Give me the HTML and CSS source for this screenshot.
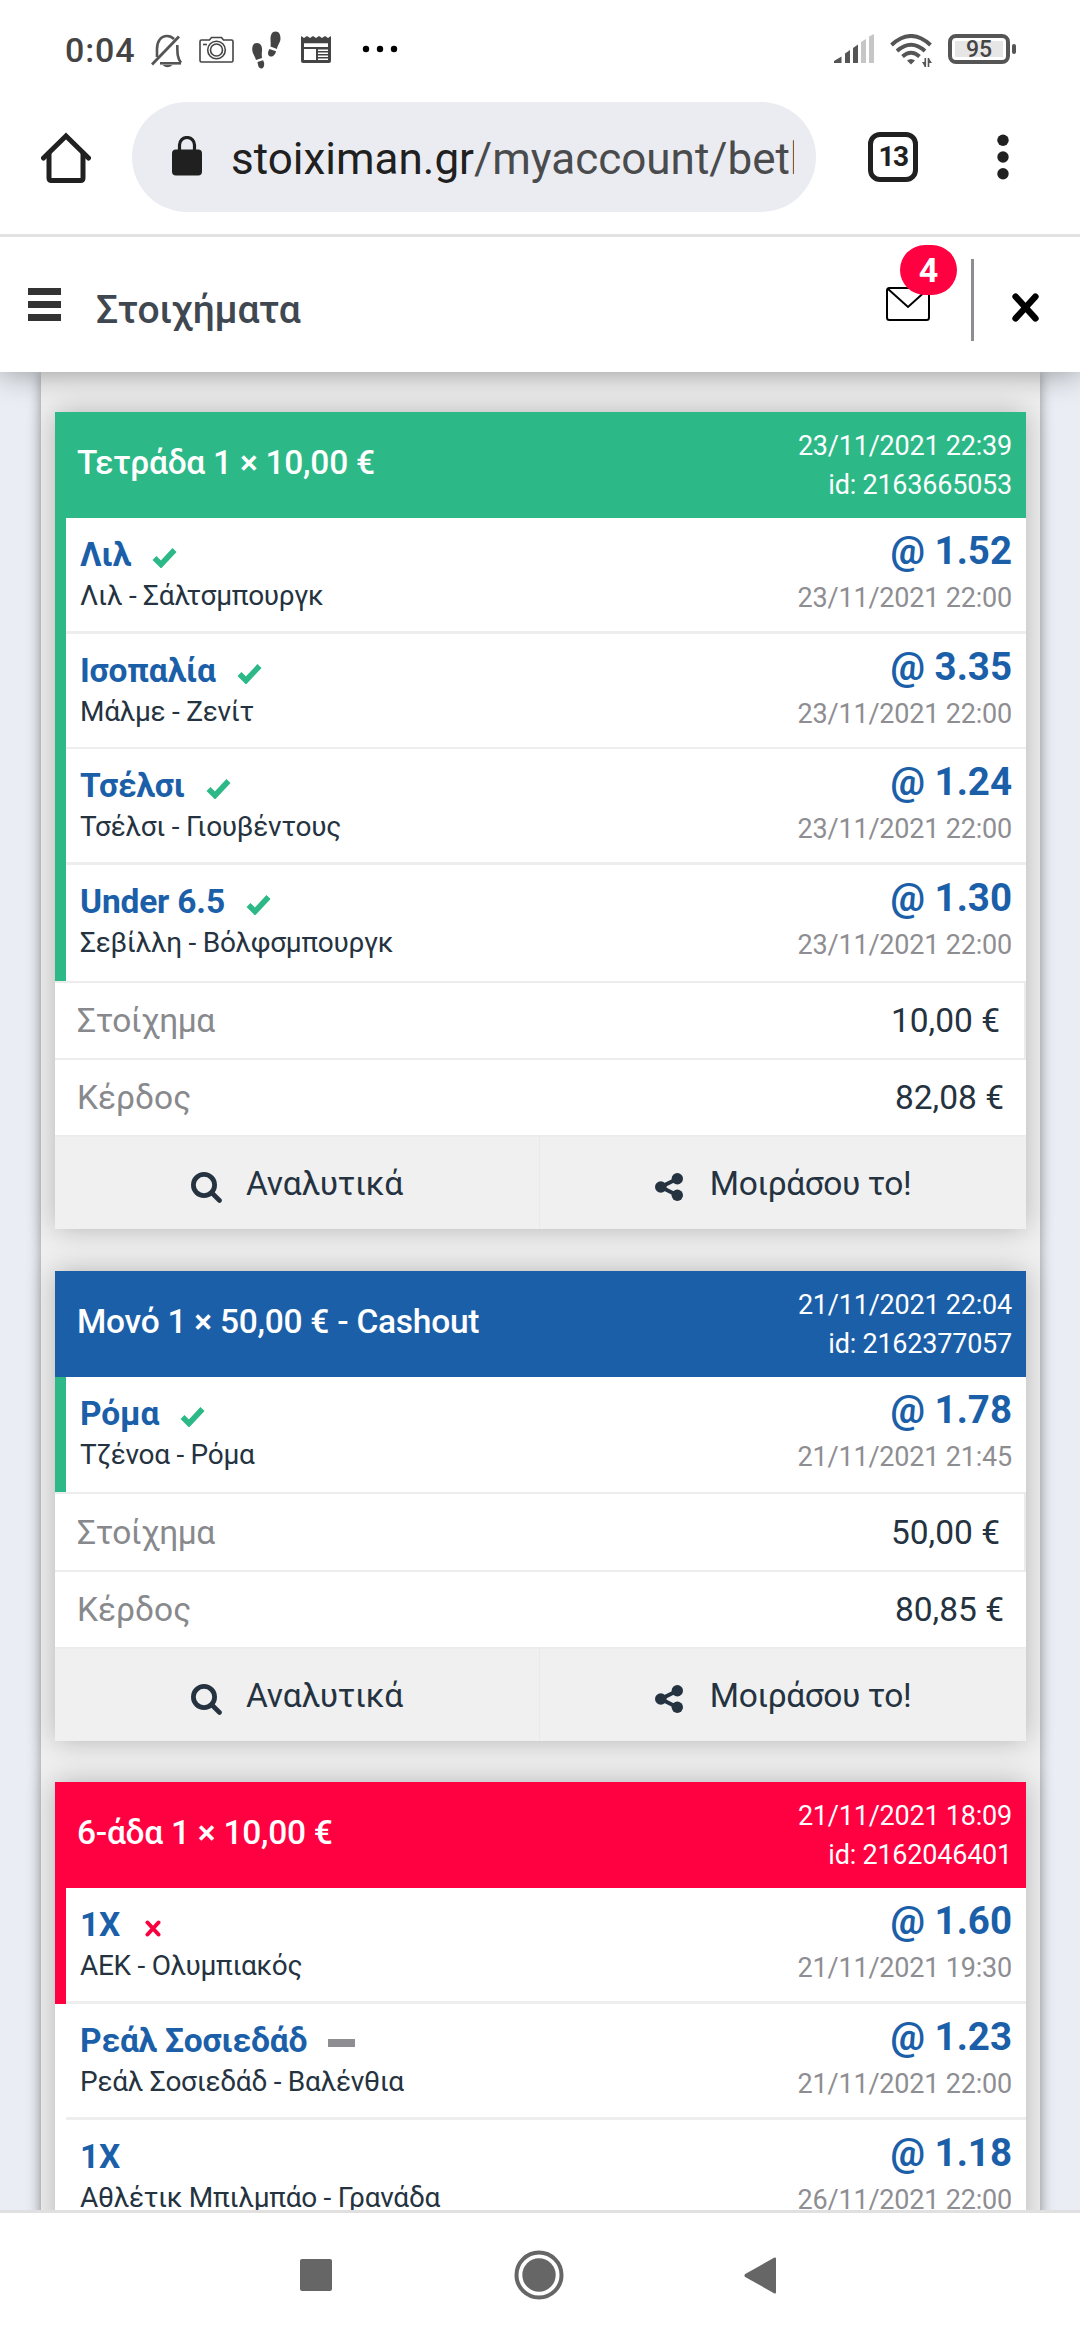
FILE: index.html
```html
<!DOCTYPE html>
<html lang="el">
<head>
<meta charset="utf-8">
<title>Στοιχήματα</title>
<link rel="stylesheet" href="styles.css">
</head>
<body>
<svg class="defs" width="0" height="0">
  <symbol id="check" viewBox="0 0 25 21"><path d="M2.5 11 L9 17.5 L22.5 3" fill="none" stroke="#2cb987" stroke-width="5.6"/></symbol>
  <symbol id="search" viewBox="0 0 31 31"><circle cx="13" cy="13" r="10.6" fill="none" stroke="#253341" stroke-width="4.8"/><path d="M20.5 20.5 L28.5 28.5" stroke="#253341" stroke-width="4.6" stroke-linecap="round"/></symbol>
  <symbol id="share" viewBox="0 0 28 28"><path d="M22.3 5.8 L5.8 14 L22.3 22.2" fill="none" stroke="#253341" stroke-width="4"/><circle cx="5.8" cy="14" r="5.8" fill="#253341"/><circle cx="22.3" cy="5.7" r="5.7" fill="#253341"/><circle cx="22.3" cy="22.3" r="5.7" fill="#253341"/></symbol>
</svg>
<div class="screen">
  <div class="status">
    <span class="clock">0:04</span>
    <svg class="st-bell" width="32" height="34" viewBox="0 0 32 34" fill="none" stroke="#555" stroke-width="2.6"><path d="M6 23 V15 C6 7 10 2 16 2 C19 2 21 3 23 5"/><path d="M9 29.3 H30"/><path d="M26.3 11 C26.3 20 26.5 24 30 28.8" /><path d="M1 30.5 L28 2.5" stroke-width="2.8"/><path d="M11.5 31 H21.5 Q16.500 35.500 11.500 31Z" fill="#555" stroke="none"/></svg>
    <svg class="st-cam" width="35" height="27" viewBox="0 0 35 27" fill="none" stroke="#444" stroke-width="1.6"><path d="M2.500 4 H10.500 L12.500 1.500 H22.500 L24.500 4 H32.500 Q34 4 34 5.500 V24.500 Q34 26 32.500 26 H2.500 Q1 26 1 24.500 V5.500 Q1 4 2.500 4Z"/><circle cx="17.500" cy="14" r="8.800"/><circle cx="17.500" cy="14" r="6"/><path d="M4 8.500 H8"/></svg>
    <svg class="st-feet" width="29" height="38" viewBox="0 0 29 38" fill="#444"><path d="M5 12 C9 12 10.500 16 10 20 C9.500 23 10 26 10 27 L4 29 C3 25 0 22 .2 18 C.4 14 2 12 5 12Z"/><path d="M5.500 31 L11 29.300 C13 32 12.500 37.500 9.500 37.500 C6.500 37.500 6 34 5.500 31Z"/><path d="M23.500 .5 C27.500 .5 28.500 4 28.500 7.500 C28.500 11.500 25.500 14 25 18 L18.500 15.500 C19 13 18.500 11 18.500 8 C18.500 4 20 .5 23.500 .5Z"/><path d="M17.500 18 L24 20.300 C23.500 23 21.500 26 18.500 25.500 C15.500 25 15.300 21.500 17.500 18Z"/></svg>
    <svg class="st-news" width="30" height="28" viewBox="0 0 30 28"><path d="M0 1 L3 3 L6 1 L9 3 L12 1 L15 3 L18 1 L21 3 L24 1 L27 3 L30 1 V26 Q30 28 28 28 H2 Q0 28 0 26Z" fill="#444"/><path d="M3 8.300 H27 V12 H3Z M3 14 H15 V25 H3Z M17 14.500 H27 V16 H17Z M17 17.500 H27 V19 H17Z M17 20.500 H27 V22 H17Z M17 23.500 H27 V25 H17Z" fill="#fff"/></svg>
    <svg class="st-dots" width="36" height="8" viewBox="0 0 36 8"><circle cx="4" cy="4" r="3.200"/><circle cx="18" cy="4" r="3.200"/><circle cx="32" cy="4" r="3.200"/></svg>
    <svg class="st-signal" width="40" height="30" viewBox="0 0 40 30"><path d="M0 29 V27 L7.500 22.500 V29Z M11 29 V19.500 L16 16 V29Z M19 29 V14 L24 10.500 V29Z" fill="#555"/><path d="M27 29 V8 L32 5 V29Z M35 29 V2.500 L40 0 V29Z" fill="#c6c6c6"/></svg>
    <svg class="st-wifi" width="43" height="34" viewBox="0 0 43 34" fill="none" stroke="#555" stroke-width="3.900"><path d="M1.500 11 Q21 -7 40.500 11"/><path d="M7 17 Q21 4.500 35 17"/><path d="M12.500 22.500 Q21 15 29.500 22.500"/><path d="M17 26.500 Q21 23.500 25 26.500 L21 30.500Z" fill="#555" stroke="none"/><path d="M35.300 24 V33 M38.500 24 V33" stroke-width="1.600"/><path d="M32 28 H35 V33Z M38.500 24 V29 H42Z" fill="#555" stroke="none"/></svg>
    <span class="battery"><span class="level">95</span></span><span class="tip"></span>
  </div>
  <div class="browser">
    <svg class="home" width="50" height="51" viewBox="0 0 50 51" fill="none" stroke="#202020" stroke-width="5"><path d="M8 20 V46 Q8 48.500 10.500 48.500 H39.500 Q42 48.500 42 46 V20"/><path d="M2.500 26 L25 4 L47.500 26" stroke-linecap="round"/></svg>
    <div class="url">
      <svg width="30" height="40" viewBox="0 0 30 40"><rect y="13.500" width="30" height="26" rx="4" fill="#202020"/><path d="M7.500 15 V9 A7.500 7.500 0 0 1 22.500 9 V15" fill="none" stroke="#202020" stroke-width="3.200"/></svg>
      <span class="addr">stoiximan.gr<em>/myaccount/beth</em></span>
    </div>
    <span class="tabs">13</span>
    <svg class="more" width="12" height="46" viewBox="0 0 12 46" fill="#202020"><circle cx="6" cy="6.300" r="5.700"/><circle cx="6" cy="23" r="5.700"/><circle cx="6" cy="39.700" r="5.700"/></svg>
  </div>
  <header class="topbar">
    <svg class="burger" width="33" height="34" viewBox="0 0 33 34" fill="#333"><path d="M0 0H33V7H0ZM0 13H33V20H0ZM0 26H33V33H0Z"/></svg>
    <h1>Στοιχήματα</h1>
    <div class="mail">
      <svg width="44" height="34" viewBox="0 0 44 34" fill="none" stroke="#000" stroke-width="2"><rect x="1" y="1" width="42" height="32" rx="2.500"/><path d="M1.500 1.500 L22 20 L42.500 1.500"/></svg>
      <span class="badge">4</span>
    </div>
    <span class="rule"></span>
    <svg class="close" width="27" height="29" viewBox="0 0 27 29" stroke="#000" stroke-width="6.500" stroke-linecap="round"><path d="M3.600 3.600 L23.400 25.400 M23.400 3.600 L3.600 25.400"/></svg>
  </header>
  <main class="page">
    <div class="list">
      <section class="card">
        <div class="head won"><h2>Τετράδα 1 × 10,00 €</h2><p>23/11/2021 22:39<br>id: 2163665053</p></div>
        <div class="leg hit"><div class="pick"><h3>Λιλ<svg class="mark"><use href="#check"/></svg></h3><p>Λιλ - Σάλτσμπουργκ</p></div><div class="odds"><b>@ 1.52</b><time>23/11/2021 22:00</time></div></div>
        <div class="leg hit tight"><div class="pick"><h3>Ισοπαλία<svg class="mark"><use href="#check"/></svg></h3><p>Μάλμε - Ζενίτ</p></div><div class="odds"><b>@ 3.35</b><time>23/11/2021 22:00</time></div></div>
        <div class="leg hit"><div class="pick"><h3>Τσέλσι<svg class="mark"><use href="#check"/></svg></h3><p>Τσέλσι - Γιουβέντους</p></div><div class="odds"><b>@ 1.24</b><time>23/11/2021 22:00</time></div></div>
        <div class="leg hit last"><div class="pick"><h3>Under 6.5<svg class="mark"><use href="#check"/></svg></h3><p>Σεβίλλη - Βόλφσμπουργκ</p></div><div class="odds"><b>@ 1.30</b><time>23/11/2021 22:00</time></div></div>
        <div class="total stake"><span>Στοίχημα</span><span class="sum">10,00 €</span></div>
        <div class="total"><span>Κέρδος</span><span class="sum">82,08 €</span></div>
        <div class="actions"><a><svg class="ic-search"><use href="#search"/></svg>Αναλυτικά</a><a><svg class="ic-share"><use href="#share"/></svg>Μοιράσου το!</a></div>
      </section>
      <section class="card">
        <div class="head cashout"><h2>Μονό 1 × 50,00 € - Cashout</h2><p>21/11/2021 22:04<br>id: 2162377057</p></div>
        <div class="leg hit tight last"><div class="pick"><h3>Ρόμα<svg class="mark"><use href="#check"/></svg></h3><p>Τζένοα - Ρόμα</p></div><div class="odds"><b>@ 1.78</b><time>21/11/2021 21:45</time></div></div>
        <div class="total stake tall"><span>Στοίχημα</span><span class="sum">50,00 €</span></div>
        <div class="total"><span>Κέρδος</span><span class="sum">80,85 €</span></div>
        <div class="actions"><a><svg class="ic-search"><use href="#search"/></svg>Αναλυτικά</a><a><svg class="ic-share"><use href="#share"/></svg>Μοιράσου το!</a></div>
      </section>
      <section class="card">
        <div class="head lost"><h2>6-άδα 1 × 10,00 €</h2><p>21/11/2021 18:09<br>id: 2162046401</p></div>
        <div class="leg miss"><div class="pick"><h3>1X<svg class="cross" width="16" height="17" viewBox="0 0 16 17" stroke="#f9003e" stroke-width="4" stroke-linecap="round"><path d="M2.500 2.500 L13.500 14.500 M13.500 2.500 L2.500 14.500"/></svg></h3><p>ΑΕΚ - Ολυμπιακός</p></div><div class="odds"><b>@ 1.60</b><time>21/11/2021 19:30</time></div></div>
        <div class="leg"><div class="pick"><h3>Ρεάλ Σοσιεδάδ<span class="dash"></span></h3><p>Ρεάλ Σοσιεδάδ - Βαλένθια</p></div><div class="odds"><b>@ 1.23</b><time>21/11/2021 22:00</time></div></div>
        <div class="leg"><div class="pick"><h3>1X</h3><p>Αθλέτικ Μπιλμπάο - Γρανάδα</p></div><div class="odds"><b>@ 1.18</b><time>26/11/2021 22:00</time></div></div>
      </section>
    </div>
  </main>
  <nav class="navbar">
    <svg width="32" height="32"><rect width="32" height="32" rx="2" fill="#666"/></svg>
    <svg width="50" height="50" viewBox="0 0 50 50"><circle cx="25" cy="25" r="22.500" fill="none" stroke="#666" stroke-width="4"/><circle cx="25" cy="25" r="16.700" fill="#666"/></svg>
    <svg width="32" height="37" viewBox="0 0 32 37"><path d="M30 .8 Q32 -.4 32 1.800 V35.200 Q32 37.400 30 36.200 L1.200 20 Q-.4 18.500 1.200 17Z" fill="#666"/></svg>
  </nav>
</div>
</body>
</html>
```
FILE: styles.css
```css
* { box-sizing: border-box; }
body { margin: 0; font-family: Roboto, "Noto Sans", sans-serif; color: #253341; background: #fff; }
h1, h2, h3, p { margin: 0; }
svg { display: block; flex: none; }
.defs { position: absolute; }
.screen { width: 1080px; height: 2340px; display: flex; flex-direction: column; overflow: hidden; }

.status { height: 102px; display: flex; align-items: flex-start; padding: 0 64px 0 65px; flex: none; }
.clock { font-size: 34px; font-weight: 500; line-height: 40px; margin-top: 30px; color: #444; width: 71px; letter-spacing: .9px; }
.st-bell { margin: 34px 0 0 15px; }
.st-cam { margin: 36px 0 0 16px; }
.st-feet { margin: 31px 0 0 18px; }
.st-news { margin: 35px 0 0 20px; }
.st-dots { margin: 45px auto 0 31px; }
.st-signal { margin-top: 34px; }
.st-wifi { margin: 34px 0 0 16px; }
.battery { width: 62px; height: 30px; margin: 34px 0 0 15px; border: 4px solid #555; border-radius: 8px; padding: 3px; }
.level { display: block; height: 16px; line-height: 18px; background: #e6e6e6; text-align: center; font-size: 23px; font-weight: 500; color: #444; }
.tip { width: 4px; height: 10px; margin: 44px 0 0 2px; border-radius: 2px; background: #555; }

.browser { height: 132px; display: flex; align-items: flex-start; padding-left: 41px; flex: none; }
.home { margin-top: 30px; }
.url { width: 684px; height: 110px; margin-left: 41px; border-radius: 55px; background: #ebecf1; display: flex; align-items: center; padding: 0 22px 0 40px; }
.url svg { margin-top: -2px; }
.addr { margin-left: 29px; width: 563px; overflow: hidden; white-space: nowrap; font-size: 44px; line-height: 56px; margin-top: 4px; color: #202020; }
.addr em { font-style: normal; color: #4a4b4c; }
.tabs { width: 50px; height: 50px; margin: 30px 0 0 52px; border: 5px solid #202020; border-radius: 12px; font-size: 28px; font-weight: 700; line-height: 39px; text-align: center; color: #202020; letter-spacing: -1.5px; }
.more { margin: 32px 0 0 79px; }

.topbar { height: 138px; flex: none; border-top: 3px solid #e2e2e2; background: #fff; display: flex; align-items: flex-start; padding-left: 28px; position: relative; z-index: 1; box-shadow: 0 0 30px rgba(0,0,0,.4); clip-path: inset(0 0 -40px 0); }
.burger { margin-top: 51px; }
.topbar h1 { font-size: 39px; font-weight: 500; line-height: 50px; margin: 48px auto 0 35px; color: #3f4750; letter-spacing: -.3px; }
.mail { position: relative; width: 44px; margin-top: 50px; }
.badge { position: absolute; left: 14px; top: -42px; width: 57px; height: 50px; border-radius: 25px; background: #ff0040; color: #fff; font-size: 34px; font-weight: 700; line-height: 50px; text-align: center; }
.rule { width: 3px; height: 82px; margin: 22px 0 0 41px; background: #8e8e92; }
.close { margin: 56px 41px 0 38px; }

.page { flex: 1; min-height: 0; overflow: hidden; background: #eaeef4; padding: 0 40px 0 41px; }
.list { min-height: 100%; background: #f0f0f0; box-shadow: 0 0 12px rgba(0,0,0,.4); padding: 40px 14px 0; }
.card { background: #fff; margin-bottom: 42px; box-shadow: 0 0 26px rgba(0,0,0,.25); }
.card + .card { margin-bottom: 41px; }
.head { height: 106px; display: flex; justify-content: space-between; padding: 0 14px 0 22px; color: #fff; }
.won { background: #2cb987; }
.cashout { background: #1c5fa9; }
.lost { background: #ff0040; }
.head h2 { font-size: 33.500px; font-weight: 500; line-height: 102px; letter-spacing: -.26px; }
.head p { padding-top: 15px; font-size: 27px; line-height: 39px; text-align: right; letter-spacing: -.22px; }
.leg { height: 116px; display: flex; justify-content: space-between; position: relative; padding: 0 14px 0 25px; background: linear-gradient(#eee, #eee) 11px 100% / 100% 3px no-repeat; }
.leg.hit { border-left: 11px solid #2cb987; padding-left: 14px; background-position: 0 100%; }
.leg.miss { border-left: 11px solid #ff0040; padding-left: 14px; background-position: 0 100%; }
.leg.tight { height: 115px; background-size: 100% 2px; }
.leg.last { background: none; }
.pick { padding-top: 17px; }
.pick h3 { display: flex; font-size: 33.500px; font-weight: 700; line-height: 40px; color: #1c5fa9; letter-spacing: -.18px; }
.pick p { font-size: 28px; line-height: 41px; letter-spacing: -.28px; }
.mark { width: 25px; height: 21px; margin: 12px 0 0 21px; }
.cross { margin: 15px 0 0 25px; }
.dash { width: 27px; height: 8px; margin: 18px 0 0 21px; background: #8e8e92; }
.odds { padding-top: 9px; text-align: right; }
.odds b { display: block; font-size: 38.500px; line-height: 48px; color: #1c5fa9; }
.odds time { display: block; font-size: 27px; line-height: 47px; color: #8e8e92; letter-spacing: -.2px; }
.total { height: 77px; border-top: 2px solid #ececec; display: flex; justify-content: space-between; align-items: center; padding: 0 22px; font-size: 33.500px; color: #88898d; }
.total.stake { border-right: 2px solid #ececec; padding-right: 24px; }
.stake span:first-child { letter-spacing: -.5px; }
.total.tall { height: 78px; }
.sum { color: #253341; }
.actions { height: 94px; border-top: 2px solid #ececec; background: #f0f0f0; display: grid; grid-template-columns: 485px 486px; font-size: 33.500px; }
.actions a { display: flex; align-items: center; justify-content: center; letter-spacing: -.2px; }
.actions a + a { letter-spacing: -.45px; }
.actions a:first-child { border-right: 1px solid #e9e9ea; }
.ic-search { width: 31px; height: 31px; margin: 8px 24px 0 0; }
.ic-share { width: 28px; height: 28px; margin: 8px 27px 0 0; }

.navbar { height: 130px; flex: none; border-top: 3px solid #e0e0e0; display: flex; align-items: center; padding: 0 0 3px 300px; }
.navbar svg:nth-child(2) { margin: 0 180px 0 182px; }
```
